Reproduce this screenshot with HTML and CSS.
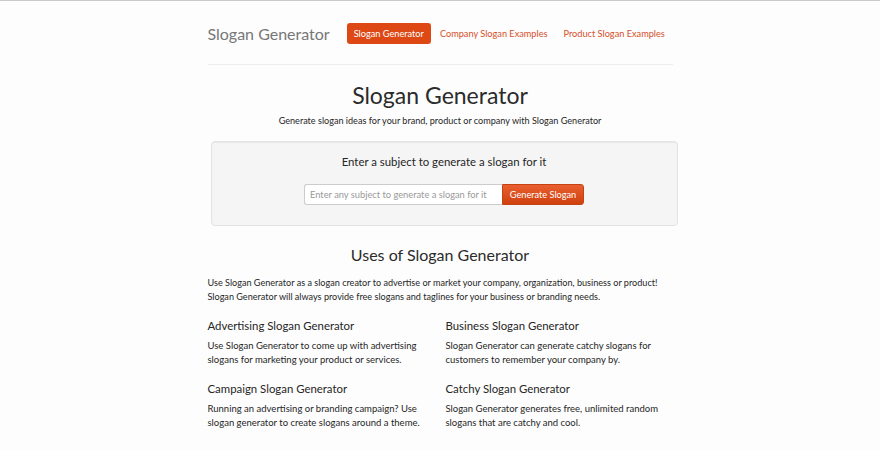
FILE: index.html
```html
<!DOCTYPE html>
<html lang="en">
<head>
    <meta charset="UTF-8">
    <meta name="viewport" content="width=device-width, initial-scale=1.0">
    <title>Slogan Generator</title>
    <link rel="stylesheet" href="styles.css">
</head>
<body>
    <div class="container">
        <!-- Шапка -->
        <div class="header">
            <a class="brand" href="#">Slogan Generator</a>
            <ul class="nav">
                <li><a class="active" href="#">Slogan Generator</a></li>
                <li><a href="#">Company Slogan Examples</a></li>
                <li><a href="#">Product Slogan Examples</a></li>
            </ul>
        </div>

        <!-- Заголовок -->
        <h1 class="title">Slogan Generator</h1>
        <p class="lead">Generate slogan ideas for your brand, product or company with Slogan Generator</p>

        <!-- Форма -->
        <div class="well">
            <div class="well-title">Enter a subject to generate a slogan for it</div>
            <form class="gen-form">
                <input type="text" placeholder="Enter any subject to generate a slogan for it">
                <button type="button">Generate Slogan</button>
            </form>
        </div>

        <!-- Описание -->
        <h2 class="uses">Uses of Slogan Generator</h2>
        <p class="intro">Use Slogan Generator as a slogan creator to advertise or market your company, organization, business or product!<br>Slogan Generator will always provide free slogans and taglines for your business or branding needs.</p>

        <div class="grid">
            <div class="item">
                <h3>Advertising Slogan Generator</h3>
                <p>Use Slogan Generator to come up with advertising<br>slogans for marketing your product or services.</p>
            </div>
            <div class="item">
                <h3>Business Slogan Generator</h3>
                <p>Slogan Generator can generate catchy slogans for<br>customers to remember your company by.</p>
            </div>
            <div class="item">
                <h3>Campaign Slogan Generator</h3>
                <p>Running an advertising or branding campaign? Use<br>slogan generator to create slogans around a theme.</p>
            </div>
            <div class="item">
                <h3>Catchy Slogan Generator</h3>
                <p>Slogan Generator generates free, unlimited random<br>slogans that are catchy and cool.</p>
            </div>
        </div>
    </div>
</body>
</html>
```

FILE: styles.css
```css
/* Основные стили */
body {
    margin: 0;
    padding: 0;
    background-color: #fdfdfd;
    border-top: 1px solid #cacaca;
    color: #262626;
    font-family: Lato, sans-serif;
    font-size: 9.5px;
    line-height: 14px;
}

.container {
    width: 465px;
    margin: 0 auto;
}

/* Шапка */
.header {
    display: flex;
    align-items: center;
    padding: 22px 0 20px;
    border-bottom: 1px solid #eee;
    white-space: nowrap;
}

.brand {
    color: #777;
    font-size: 16px;
    text-decoration: none;
    margin-right: 17px;
}

.nav {
    display: flex;
    list-style: none;
    margin: 0;
    padding: 0;
    gap: 2px;
}

.nav a {
    display: block;
    padding: 4px 7px;
    color: #d5502a;
    text-decoration: none;
    font-size: 9.2px;
    line-height: 13px;
    border-radius: 3px;
}

.nav a.active {
    background-color: #dd4814;
    color: #fff;
}

/* Заголовок */
.title {
    margin: 16px 0 0;
    text-align: center;
    font-weight: normal;
    font-size: 23px;
    line-height: 28px;
    color: #2b2b2b;
}

.lead {
    margin: 5px 0 13px;
    text-align: center;
    font-size: 9.1px;
}

/* Блок формы */
.well {
    margin: 0 -5px 0 3px;
    padding: 12px 0 20px;
    background-color: #f5f5f5;
    border: 1px solid #e3e3e3;
    border-radius: 4px;
    box-shadow: inset 0 1px 1px rgba(0, 0, 0, 0.05);
    text-align: center;
}

.well-title {
    font-size: 11.4px;
    line-height: 16px;
}

.gen-form {
    display: flex;
    justify-content: center;
    margin-top: 14px;
}

.gen-form input {
    width: 198px;
    height: 21px;
    box-sizing: border-box;
    padding: 0 5px;
    border: 1px solid #ccc;
    border-right: none;
    border-radius: 3px 0 0 3px;
    font-family: inherit;
    font-size: 9.3px;
    background: #fff;
}

.gen-form input::placeholder {
    color: #999;
}

.gen-form button {
    width: 82px;
    height: 21px;
    padding: 0;
    border: 1px solid #c54213;
    border-radius: 0 3px 3px 0;
    background: linear-gradient(#e95f2f, #cf400e);
    color: #fff;
    font-family: inherit;
    font-size: 9.2px;
}

/* Описание */
.uses {
    margin: 19px 0 11px;
    text-align: center;
    font-weight: normal;
    font-size: 16px;
    line-height: 20px;
    color: #2b2b2b;
}

.intro {
    margin: 0 0 14px;
    font-size: 9.1px;
    white-space: nowrap;
}

.grid {
    display: grid;
    grid-template-columns: 238px 1fr;
    row-gap: 14px;
}

.item h3 {
    margin: 0 0 5px;
    font-weight: normal;
    font-size: 11.4px;
    line-height: 16px;
}

.item p {
    margin: 0;
    white-space: nowrap;
}
```
